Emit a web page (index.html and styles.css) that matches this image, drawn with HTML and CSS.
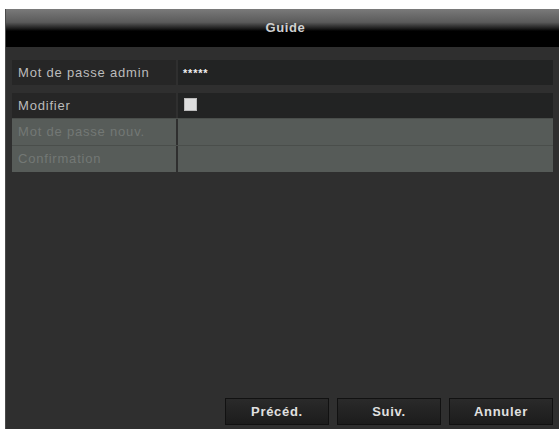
FILE: index.html
```html
<!DOCTYPE html>
<html lang="fr">
<head>
    <meta charset="UTF-8">
    <title>Guide</title>
    <link rel="stylesheet" href="styles.css">
</head>
<body>
    <div class="dialog">
        <div class="title-bar">Guide</div>

        <div class="content">
            <div class="form">
                <div class="row row-active">
                    <div class="label">Mot de passe admin</div>
                    <div class="value"><span class="password">*****</span></div>
                </div>
                <div class="row row-active">
                    <div class="label">Modifier</div>
                    <div class="value"><span class="checkbox"></span></div>
                </div>
                <div class="row row-disabled">
                    <div class="label">Mot de passe nouv.</div>
                    <div class="value"></div>
                </div>
                <div class="row row-disabled">
                    <div class="label">Confirmation</div>
                    <div class="value"></div>
                </div>
            </div>

            <div class="buttons">
                <button class="button">Précéd.</button>
                <button class="button">Suiv.</button>
                <button class="button">Annuler</button>
            </div>
        </div>
    </div>
</body>
</html>
```

FILE: styles.css
```css
* {
    box-sizing: border-box;
    margin: 0;
    padding: 0;
}

html, body {
    height: 100%;
}

body {
    font-family: "Liberation Sans", Arial, sans-serif;
    background: #ffffff;
    padding: 9px 0 0 5px;
    overflow: hidden;
}

.dialog {
    height: 100%;
    display: flex;
    flex-direction: column;
    background: #2f2f2f;
    border-left: 1px solid #4a4a4a;
}

.title-bar {
    height: 38px;
    padding-top: 11px;
    padding-left: 6px;
    text-align: center;
    color: #d0d0d0;
    font-size: 13px;
    font-weight: bold;
    letter-spacing: 0.6px;
    background: linear-gradient(to bottom, #7a7a7a 0%, #5a5a5a 35%, #1a1a1a 52%, #000 58%, #000 100%);
}

.content {
    flex: 1;
    display: flex;
    flex-direction: column;
    justify-content: space-between;
    padding: 13px 6px 4px 6px;
}

.form {
    display: flex;
    flex-direction: column;
}

.row {
    display: flex;
    height: 25px;
}

.row-active + .row-active {
    margin-top: 8px;
}

.row-active .label {
    background: #262626;
    color: #bcbcbc;
}

.row-active .value {
    background: #222323;
}

.row-disabled {
    border-top: 1px solid #4a4e4b;
    height: 27px;
}

.row-disabled .label {
    background: #575c59;
    color: #737875;
}

.row-disabled .value {
    background: #565b58;
}

.label {
    width: 164px;
    margin-right: 2px;
    padding: 5px 0 0 6px;
    font-size: 13px;
    letter-spacing: 0.8px;
}

.value {
    flex: 1;
    padding: 3px 0 0 5px;
}

.password {
    color: #f0f0f0;
    font-size: 11px;
    font-weight: bold;
    letter-spacing: 0.8px;
}

.checkbox {
    display: block;
    width: 13px;
    height: 13px;
    margin-top: 2px;
    margin-left: 1px;
    background: #dedede;
    border: 1px solid #bbb;
}

.buttons {
    display: flex;
    justify-content: flex-end;
    gap: 8px;
}

.button {
    width: 104px;
    height: 27px;
    border: 1px solid #111;
    background: linear-gradient(to bottom, #2a2a2a 0%, #1c1c1c 100%);
    color: #e0e0e0;
    font-family: "Liberation Sans", Arial, sans-serif;
    font-size: 13px;
    font-weight: bold;
    letter-spacing: 0.7px;
}
```
